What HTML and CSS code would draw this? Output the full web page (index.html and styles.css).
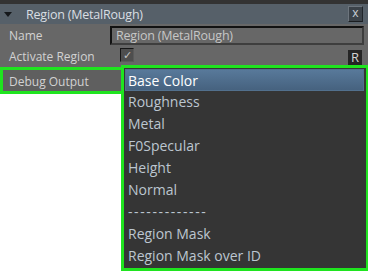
FILE: index.html
```html
<!DOCTYPE html>
<html lang="en">
<head>
    <meta charset="UTF-8">
    <title>Region (MetalRough)</title>
    <link rel="stylesheet" href="styles.css">
</head>
<body>

    <div class="panel">

        <!-- Node header -->
        <div class="panel-head">
            <span class="arrow"></span>
            <span class="title">Region (MetalRough)</span>
            <span class="close-btn">x</span>
        </div>

        <!-- Properties -->
        <div class="prop prop-name">
            <span class="label">Name</span>
            <div class="text-field">Region (MetalRough)</div>
        </div>

        <div class="prop prop-check">
            <span class="label">Activate Region</span>
            <span class="checkbox">&#10003;</span>
            <span class="reset-btn">R</span>
        </div>

        <div class="prop prop-debug">
            <span class="label">Debug Output</span>
        </div>
    </div>

    <!-- Open dropdown list -->
    <ul class="dropdown">
        <li class="selected">Base Color</li>
        <li>Roughness</li>
        <li>Metal</li>
        <li>F0Specular</li>
        <li>Height</li>
        <li>Normal</li>
        <li class="separator">-------------</li>
        <li>Region Mask</li>
        <li>Region Mask over ID</li>
    </ul>

</body>
</html>
```

FILE: styles.css
```css
/* General styles */
body {
    font-family: "Open Sans", "Noto Sans", Arial, sans-serif;
    margin: 0;
    background-color: #ffffff;
    position: relative;
    width: 368px;
    height: 271px;
    overflow: hidden;
}

/* Node panel */
.panel {
    background-color: #333333;
    padding-top: 4px;
}

.panel-head {
    display: flex;
    align-items: center;
    height: 20px;
    background-color: #566069;
    color: #d9dee3;
    font-size: 12.5px;
}

.arrow {
    width: 0;
    height: 0;
    margin: 0 14px 0 4px;
    border-left: 4px solid transparent;
    border-right: 4px solid transparent;
    border-top: 5px solid #15181b;
}

.title {
    flex: 1;
    letter-spacing: -0.2px;
}

.close-btn {
    width: 13px;
    height: 14px;
    margin-right: 5px;
    background-color: #3b4249;
    border: 1px solid #6d757d;
    border-right-color: #20252a;
    border-bottom-color: #1a1d20;
    color: #c9cfd6;
    font-size: 12px;
    line-height: 12px;
    text-align: center;
}

/* Property rows */
.prop {
    display: flex;
    align-items: center;
    background-color: #676767;
    color: #d2d2d2;
    font-size: 12px;
}

.label {
    width: 110px;
    padding-left: 9px;
    box-sizing: border-box;
}

.prop-name {
    height: 21px;
    padding-top: 1px;
}

.text-field {
    width: 254px;
    height: 19px;
    box-sizing: border-box;
    border: 2px solid #121212;
    border-right-color: #3e3e3e;
    border-bottom-color: #3e3e3e;
    padding-left: 4px;
    font-size: 12.5px;
    line-height: 15px;
    letter-spacing: -0.2px;
    color: #c6c6c6;
}

.prop-check {
    height: 21px;
    align-items: flex-start;
    padding-top: 2px;
    box-sizing: border-box;
}

.checkbox {
    width: 14px;
    height: 14px;
    box-sizing: border-box;
    margin-left: 10px;
    background-color: #4e4e4e;
    border: 1px solid #161616;
    border-right-color: #5a5a5a;
    border-bottom-color: #5a5a5a;
    color: #c4c4c4;
    font-size: 11px;
    line-height: 12px;
    text-align: center;
}

.reset-btn {
    margin-left: auto;
    margin-right: 6px;
    margin-top: 2px;
    width: 14px;
    height: 15px;
    background-color: #252525;
    color: #d4d4d4;
    font-size: 13px;
    line-height: 15px;
    text-align: center;
}

.prop-debug {
    width: 123px;
    height: 27px;
    box-sizing: border-box;
    border: 3px solid #1fe41f;
    border-right: none;
    background-color: #5f5f5f;
    align-items: flex-start;
    padding-top: 3px;
}

.prop-debug .label {
    padding-left: 6px;
}

/* Dropdown popup */
.dropdown {
    position: absolute;
    left: 121px;
    top: 65px;
    width: 247px;
    height: 206px;
    box-sizing: border-box;
    margin: 0;
    padding: 1px 2px 1px 1px;
    list-style-type: none;
    background-color: #353535;
    border: 3px solid #1fe41f;
    border-right-width: 2px;
}

.dropdown li {
    height: 22px;
    line-height: 22px;
    padding-left: 3px;
    color: #bcc6d0;
    font-size: 14px;
}

.dropdown li.separator {
    letter-spacing: 1.6px;
}

.dropdown li.selected {
    height: 22px;
    line-height: 21px;
    border: 1px solid #52708d;
    box-sizing: border-box;
    padding-left: 2px;
    background: linear-gradient(#58799a, #46627f);
    color: #ffffff;
}
```
